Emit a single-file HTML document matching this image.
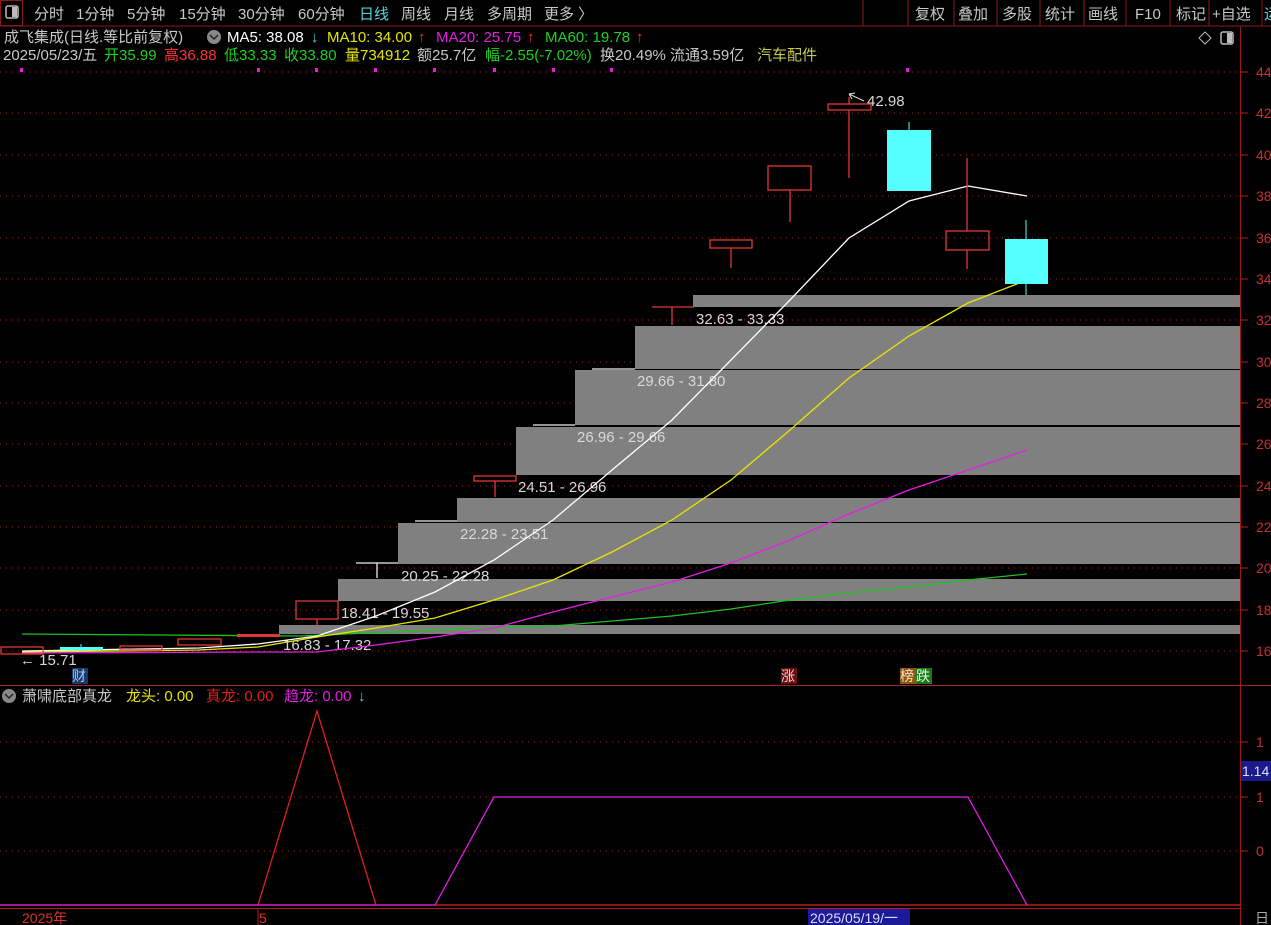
<!DOCTYPE html>
<html><head><meta charset="utf-8"><style>
html,body{margin:0;padding:0;background:#000;width:1271px;height:925px;overflow:hidden}
svg{display:block}
text{font-family:"Liberation Sans","Noto Sans CJK SC",sans-serif}
</style></head><body>
<svg width="1271" height="925" viewBox="0 0 1271 925" xmlns="http://www.w3.org/2000/svg">
<!-- top toolbar -->
<rect x="0" y="0" width="1271" height="26" fill="#000"/>
<line x1="0" y1="26" x2="1271" y2="26" stroke="#8b1a1a" stroke-width="1"/>
<rect x="0.5" y="0.5" width="22" height="25" fill="none" stroke="#8b1a1a"/>
<rect x="6" y="6" width="12" height="12" rx="2" fill="none" stroke="#bbb" stroke-width="1.5"/>
<rect x="12" y="7" width="5" height="10" fill="#bbb"/>
<g font-size="15" fill="#c8c8c8">
<text x="34" y="19">分时</text><text x="76" y="19">1分钟</text><text x="127" y="19">5分钟</text>
<text x="179" y="19">15分钟</text><text x="238" y="19">30分钟</text><text x="298" y="19">60分钟</text>
<text x="359" y="19" fill="#5ad2dc">日线</text><text x="401" y="19">周线</text><text x="444" y="19">月线</text>
<text x="487" y="19">多周期</text><text x="544" y="19">更多 〉</text>
</g>
<g stroke="#8b1a1a"><line x1="863" y1="0" x2="863" y2="26"/><line x1="908" y1="0" x2="908" y2="26"/><line x1="954" y1="0" x2="954" y2="26"/><line x1="997" y1="0" x2="997" y2="26"/><line x1="1040" y1="0" x2="1040" y2="26"/><line x1="1084" y1="0" x2="1084" y2="26"/><line x1="1126" y1="0" x2="1126" y2="26"/><line x1="1170" y1="0" x2="1170" y2="26"/><line x1="1209" y1="0" x2="1209" y2="26"/><line x1="1262" y1="0" x2="1262" y2="26"/></g>
<g font-size="15" fill="#c8c8c8">
<text x="915" y="19">复权</text><text x="958" y="19">叠加</text><text x="1002" y="19">多股</text><text x="1045" y="19">统计</text><text x="1088" y="19">画线</text><text x="1135" y="19">F10</text><text x="1176" y="19">标记</text><text x="1212" y="19">+自选</text><text x="1264" y="19" fill="#5ad2dc">运</text>
</g>
<!-- info lines -->
<g font-size="15">
<text x="4" y="42" fill="#c8c8c8">成飞集成(日线.等比前复权)</text>
<circle cx="214" cy="37" r="7" fill="#888"/><path d="M210 35 L214 39 L218 35" stroke="#222" stroke-width="1.5" fill="none"/>
<text x="227" y="42" fill="#fff">MA5: 38.08</text><text x="311" y="42" fill="#5ad2dc">↓</text>
<text x="327" y="42" fill="#e6e600">MA10: 34.00</text><text x="418" y="42" fill="#ff3030">↑</text>
<text x="436" y="42" fill="#e020e0">MA20: 25.75</text><text x="527" y="42" fill="#ff3030">↑</text>
<text x="545" y="42" fill="#20d020">MA60: 19.78</text><text x="636" y="42" fill="#ff3030">↑</text>
<text x="3" y="60" fill="#c8c8c8">2025/05/23/五</text>
<text x="104" y="60" fill="#20d020">开35.99</text>
<text x="164" y="60" fill="#ff3030">高36.88</text>
<text x="224" y="60" fill="#20d020">低33.33</text>
<text x="284" y="60" fill="#20d020">收33.80</text>
<text x="345" y="60" fill="#e6e600">量734912</text>
<text x="417" y="60" fill="#c8c8c8">额25.7亿</text>
<text x="485" y="60" fill="#20d020">幅-2.55(-7.02%)</text>
<text x="600" y="60" fill="#c8c8c8">换20.49% 流通3.59亿</text>
<text x="757" y="60" fill="#c8c850">汽车配件</text>
</g>
<path d="M1205 32 L1211 38 L1205 44 L1199 38 Z" fill="none" stroke="#bbb"/>
<rect x="1221" y="32" width="12" height="12" rx="2" fill="none" stroke="#bbb" stroke-width="1.5"/><rect x="1227" y="33" width="5" height="10" fill="#bbb"/>
<!-- magenta ticks -->
<g fill="#e020e0"><rect x="20" y="68" width="3" height="4"/><rect x="257" y="68" width="3" height="4"/><rect x="315" y="68" width="3" height="4"/><rect x="374" y="68" width="3" height="4"/><rect x="433" y="68" width="3" height="4"/><rect x="493" y="68" width="3" height="4"/><rect x="552" y="68" width="3" height="4"/><rect x="610" y="68" width="3" height="4"/><rect x="906" y="68" width="3" height="4"/></g>
<!-- right axis -->
<line x1="1240.5" y1="27" x2="1240.5" y2="925" stroke="#a01818"/>
<g stroke="#b02020" stroke-dasharray="1,5">
<line x1="0" y1="72" x2="1238" y2="72"/><line x1="0" y1="113" x2="1238" y2="113"/><line x1="0" y1="155" x2="1238" y2="155"/><line x1="0" y1="196" x2="1238" y2="196"/><line x1="0" y1="238" x2="1238" y2="238"/><line x1="0" y1="279" x2="1238" y2="279"/><line x1="0" y1="320" x2="1238" y2="320"/><line x1="0" y1="362" x2="1238" y2="362"/><line x1="0" y1="403" x2="1238" y2="403"/><line x1="0" y1="444" x2="1238" y2="444"/><line x1="0" y1="486" x2="1238" y2="486"/><line x1="0" y1="527" x2="1238" y2="527"/><line x1="0" y1="568" x2="1238" y2="568"/><line x1="0" y1="610" x2="1238" y2="610"/><line x1="0" y1="651" x2="1238" y2="651"/>
<line x1="0" y1="742" x2="1238" y2="742"/><line x1="0" y1="797" x2="1238" y2="797"/><line x1="0" y1="851" x2="1238" y2="851"/>
</g>
<g stroke="#b02020">
<line x1="1241" y1="72" x2="1248" y2="72"/><line x1="1241" y1="113" x2="1248" y2="113"/><line x1="1241" y1="155" x2="1248" y2="155"/><line x1="1241" y1="196" x2="1248" y2="196"/><line x1="1241" y1="238" x2="1248" y2="238"/><line x1="1241" y1="279" x2="1248" y2="279"/><line x1="1241" y1="320" x2="1248" y2="320"/><line x1="1241" y1="362" x2="1248" y2="362"/><line x1="1241" y1="403" x2="1248" y2="403"/><line x1="1241" y1="444" x2="1248" y2="444"/><line x1="1241" y1="486" x2="1248" y2="486"/><line x1="1241" y1="527" x2="1248" y2="527"/><line x1="1241" y1="568" x2="1248" y2="568"/><line x1="1241" y1="610" x2="1248" y2="610"/><line x1="1241" y1="651" x2="1248" y2="651"/>
<line x1="1241" y1="742" x2="1248" y2="742"/><line x1="1241" y1="797" x2="1248" y2="797"/><line x1="1241" y1="851" x2="1248" y2="851"/>
</g>
<g font-size="14" fill="#c83030">
<text x="1256" y="77">44</text><text x="1256" y="118">42</text><text x="1256" y="160">40</text><text x="1256" y="201">38</text><text x="1256" y="243">36</text><text x="1256" y="284">34</text><text x="1256" y="325">32</text><text x="1256" y="367">30</text><text x="1256" y="408">28</text><text x="1256" y="449">26</text><text x="1256" y="491">24</text><text x="1256" y="532">22</text><text x="1256" y="573">20</text><text x="1256" y="615">18</text><text x="1256" y="656">16</text>
<text x="1256" y="747">1</text><text x="1256" y="802">1</text><text x="1256" y="856">0</text>
</g>
<!-- gray bars -->
<g fill="#808080">
<rect x="693" y="295" width="547" height="12"/>
<rect x="635" y="326" width="605" height="43"/>
<rect x="575" y="370" width="665" height="55"/>
<rect x="516" y="427" width="724" height="48"/>
<rect x="457" y="498" width="783" height="24"/>
<rect x="398" y="523" width="842" height="41"/>
<rect x="338" y="579" width="902" height="22"/>
<rect x="279" y="625" width="961" height="9"/>
</g>
<g font-size="15" fill="#d8d8d8">
<text x="696" y="324">32.63 - 33.33</text>
<text x="637" y="386">29.66 - 31.80</text>
<text x="577" y="442">26.96 - 29.66</text>
<text x="518" y="492">24.51 - 26.96</text>
<text x="460" y="539">22.28 - 23.51</text>
<text x="401" y="581">20.25 - 22.28</text>
<text x="341" y="618">18.41 - 19.55</text>
<text x="283" y="650">16.83 - 17.32</text>
<text x="20" y="665">← 15.71</text>
<text x="867" y="106">42.98</text>
</g>
<path d="M849 94 L864 101 M849 94 L855 93 M849 94 L852 99" stroke="#ddd" fill="none"/>
<!-- MA lines -->
<polyline fill="none" stroke="#20c020" stroke-width="1.3" points="22,634 300,636 435,630 553,626 672,616 731,609 790,600 849,593 909,587 968,580 1027,574"/>
<polyline fill="none" stroke="#e020e0" stroke-width="1.3" points="22,653 258,652 317,652 376,645 435,637 494,628 553,612 612,597 672,582 731,563 790,540 849,514 909,490 968,470 1027,450"/>
<polyline fill="none" stroke="#e6e600" stroke-width="1.3" points="22,652 199,650 258,647 317,637 376,628 435,618 494,600 553,580 612,552 672,520 731,480 790,430 849,378 909,336 968,303 1027,280"/>
<polyline fill="none" stroke="#fff" stroke-width="1.3" points="22,651 199,648 258,644 317,636 376,616 435,592 494,560 553,520 612,470 672,420 731,360 790,300 849,238 909,201 968,186 1027,196"/>
<!-- candles -->
<g fill="none" stroke="#e03838" stroke-width="1.3">
<rect x="1" y="647" width="42" height="7"/>
<rect x="120" y="646" width="42" height="4"/>
<rect x="178" y="639" width="43" height="6"/>
<rect x="296" y="601" width="42" height="18"/><line x1="317" y1="619" x2="317" y2="625"/>
<rect x="474" y="476" width="42" height="5"/><line x1="495" y1="481" x2="495" y2="497"/>
<line x1="652" y1="307" x2="694" y2="307"/><line x1="672" y1="307" x2="672" y2="325"/>
<rect x="710" y="240" width="42" height="8"/><line x1="731" y1="248" x2="731" y2="268"/>
<rect x="768" y="166" width="43" height="24"/><line x1="790" y1="190" x2="790" y2="222"/>
<rect x="828" y="104" width="43" height="6"/><line x1="849" y1="97" x2="849" y2="104"/><line x1="849" y1="110" x2="849" y2="178"/>
<rect x="946" y="231" width="43" height="19"/><line x1="967" y1="158" x2="967" y2="231"/><line x1="967" y1="250" x2="967" y2="269"/>
</g>
<rect x="237" y="634" width="43" height="3" fill="#e03838"/>
<rect x="60" y="647" width="43" height="3" fill="#5ff"/><line x1="81" y1="644" x2="81" y2="652" stroke="#5ff"/>
<g stroke="#eee" stroke-width="1.3">
<line x1="356" y1="563" x2="398" y2="563"/><line x1="377" y1="563" x2="377" y2="578"/>
<line x1="415" y1="521" x2="457" y2="521"/>
<line x1="533" y1="425" x2="575" y2="425"/>
<line x1="592" y1="369" x2="635" y2="369"/>
</g>
<rect x="887" y="130" width="44" height="61" fill="#55ffff"/><line x1="909" y1="122" x2="909" y2="130" stroke="#5ff"/>
<rect x="1005" y="239" width="43" height="45" fill="#55ffff"/><line x1="1026" y1="220" x2="1026" y2="295" stroke="#5ff"/>
<!-- markers -->
<rect x="72" y="668" width="16" height="16" fill="#1a3a6a"/><text x="72" y="681" font-size="14" fill="#9cf">财</text>
<rect x="781" y="668" width="16" height="16" fill="#6a1010"/><text x="781" y="681" font-size="14" fill="#fcc">涨</text>
<rect x="900" y="668" width="16" height="16" fill="#8a5a10"/><text x="900" y="681" font-size="14" fill="#fdc">榜</text>
<rect x="916" y="668" width="16" height="16" fill="#1a7a1a"/><text x="916" y="681" font-size="14" fill="#dfd">跌</text>
<!-- lower pane -->
<line x1="0" y1="685.5" x2="1271" y2="685.5" stroke="#b02020"/>
<circle cx="9" cy="696" r="7" fill="#888"/><path d="M5 694 L9 698 L13 694" stroke="#222" stroke-width="1.5" fill="none"/>
<g font-size="15">
<text x="22" y="701" fill="#c8c8c8">萧啸底部真龙</text>
<text x="126" y="701" fill="#e6e600">龙头: 0.00</text>
<text x="206" y="701" fill="#e02020">真龙: 0.00</text>
<text x="284" y="701" fill="#e020e0">趋龙: 0.00</text><text x="358" y="701" fill="#5ad2dc">↓</text>
</g>
<line x1="0" y1="905" x2="1240" y2="905" stroke="#e02020" stroke-width="1.3"/>
<polyline fill="none" stroke="#e02020" stroke-width="1.3" points="258,905 317,711 376,905"/>
<polyline fill="none" stroke="#e020e0" stroke-width="1.3" points="0,905 435,905 494,797 968,797 1027,905"/>
<rect x="1241" y="761" width="30" height="20" fill="#1a1a8a"/><text x="1242" y="776" font-size="14" fill="#ddf">1.14</text>
<!-- bottom axis -->
<line x1="0" y1="908.5" x2="1240" y2="908.5" stroke="#b02020"/>
<text x="22" y="923" font-size="14" fill="#e03030">2025年</text>
<line x1="258" y1="909" x2="258" y2="925" stroke="#b02020"/>
<text x="259" y="923" font-size="14" fill="#e03030">5</text>
<rect x="808" y="909" width="102" height="16" fill="#1a1a9a"/>
<text x="810" y="923" font-size="14" fill="#dde">2025/05/19/一</text>
<text x="1255" y="923" font-size="14" fill="#aaa">日</text>
</svg>
</body></html>
